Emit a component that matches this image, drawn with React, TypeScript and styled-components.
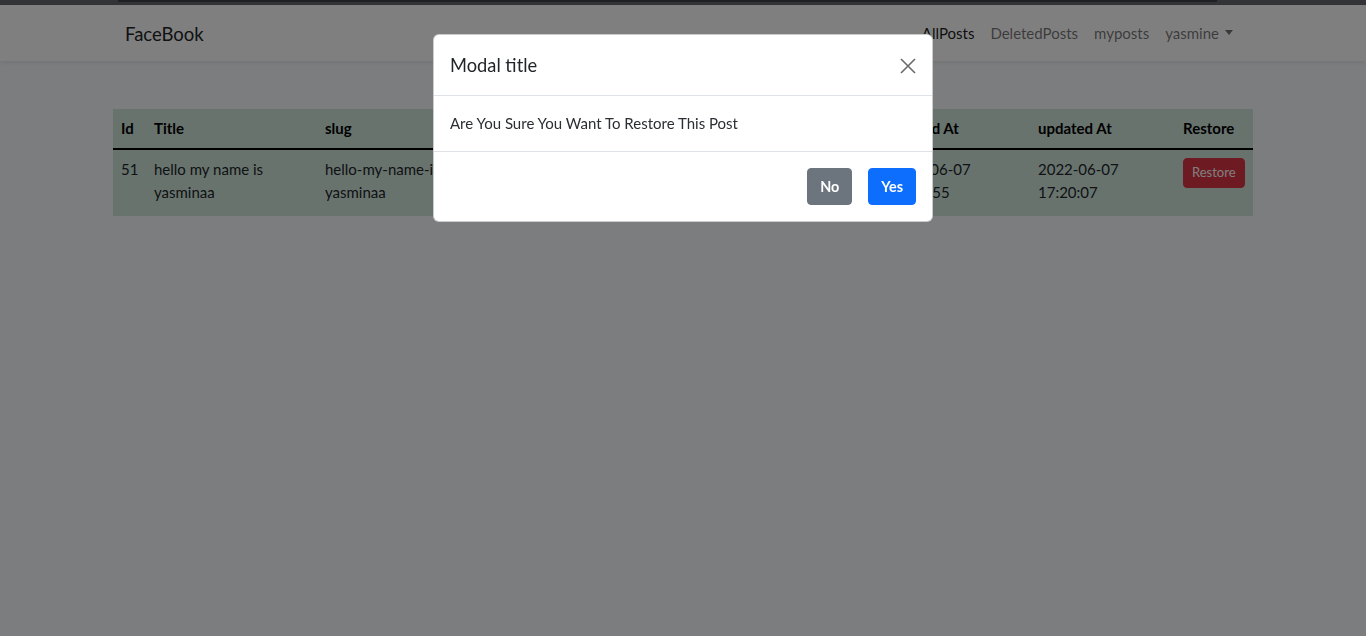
import React from "react";
import styled, { createGlobalStyle } from "styled-components";

const GlobalStyle = createGlobalStyle`
  html, body { margin: 0; padding: 0; }
  body {
    background: #f8fafc;
    font-family: "Lato", "Noto Sans", sans-serif;
    font-size: 15px;
    line-height: 23px;
    color: #212529;
  }
  * { box-sizing: border-box; }
`;

const TopStrip = styled.div`
  height: 5px;
  background: #666870;
  display: flex;
  padding-left: 118px;
  padding-right: 149px;
`;

const StripLine = styled.div`
  flex: 1;
  height: 2px;
  background: #3e4046;
`;

const Navbar = styled.nav`
  height: 56px;
  background: #ffffff;
  box-shadow: 0 2px 4px rgba(0, 0, 0, 0.075);
`;

const NavContainer = styled.div`
  max-width: 1140px;
  height: 100%;
  margin: 0 auto;
  padding: 0 12px;
  display: flex;
  align-items: center;
  justify-content: space-between;
`;

const Brand = styled.a`
  font-size: 18.5px;
  color: #212529;
  text-decoration: none;
  line-height: 28px;
  padding-top: 2px;
`;

const NavList = styled.div`
  display: flex;
  align-items: center;
`;

const NavLink = styled.a<{ $active?: boolean }>`
  padding: 8px 8px;
  color: ${(p) => (p.$active ? "rgba(0,0,0,0.9)" : "rgba(0,0,0,0.55)")};
  text-decoration: none;
  display: flex;
  align-items: center;
`;

const Caret = styled.span`
  display: inline-block;
  margin-left: 6px;
  border-top: 5px solid currentColor;
  border-left: 4.5px solid transparent;
  border-right: 4.5px solid transparent;
  transform: translateY(-1px);
`;

const Main = styled.main`
  max-width: 1140px;
  margin: 0 auto;
  padding-top: 48px;
`;

const Table = styled.table`
  width: 100%;
  border-collapse: collapse;
  table-layout: fixed;
  background: #d1e7dd;
  color: #000;
`;

const Th = styled.th`
  text-align: left;
  font-weight: 700;
  padding: 8px;
  border-bottom: 2px solid #000;
  vertical-align: bottom;
`;

const Td = styled.td`
  padding: 8px 8px 12px;
  vertical-align: top;
  color: #212529;
  height: 66px;
`;

const SmallDanger = styled.button`
  font-family: inherit;
  font-size: 13px;
  line-height: 1.5;
  padding: 4px 8px;
  border-radius: 4px;
  border: 1px solid #dc3545;
  background: #dc3545;
  color: #fff;
`;

const Backdrop = styled.div`
  position: fixed;
  inset: 0;
  background: rgba(0, 0, 0, 0.5);
  display: flex;
  justify-content: center;
  align-items: flex-start;
  padding-top: 34px;
`;

const Modal = styled.div`
  width: 500px;
  background: #fff;
  border: 1px solid rgba(0, 0, 0, 0.2);
  border-radius: 6px;
  display: flex;
  flex-direction: column;
`;

const ModalHeader = styled.div`
  display: flex;
  align-items: center;
  justify-content: space-between;
  padding: 17px 16px 16px;
  border-bottom: 1px solid #dee2e6;
`;

const ModalTitle = styled.h5`
  margin: 0;
  font-size: 18.3px;
  font-weight: 400;
  line-height: 27px;
  color: #212529;
`;

const CloseBtn = styled.button`
  width: 16px;
  height: 16px;
  padding: 0;
  border: 0;
  background: transparent;
  display: flex;
  align-items: center;
  justify-content: center;
`;

const ModalBody = styled.div`
  padding: 16px;
  color: #2b2f33;
`;

const ModalFooter = styled.div`
  display: flex;
  justify-content: flex-end;
  gap: 16px;
  padding: 16px;
  border-top: 1px solid #dee2e6;
`;

const Btn = styled.button<{ $variant: "secondary" | "primary" }>`
  font-family: inherit;
  font-size: 14.4px;
  font-weight: 700;
  line-height: 23px;
  padding: 6px 12px;
  border-radius: 4px;
  color: #fff;
  border: 1px solid ${(p) => (p.$variant === "primary" ? "#0d6efd" : "#6c757d")};
  background: ${(p) => (p.$variant === "primary" ? "#0d6efd" : "#6c757d")};
`;

export default function App() {
  return (
    <>
      <GlobalStyle />
      <TopStrip>
        <StripLine />
      </TopStrip>
      <Navbar>
        <NavContainer>
          <Brand href="#">FaceBook</Brand>
          <NavList>
            <NavLink $active href="#">AllPosts</NavLink>
            <NavLink href="#">DeletedPosts</NavLink>
            <NavLink href="#">myposts</NavLink>
            <NavLink href="#">
              yasmine
              <Caret />
            </NavLink>
          </NavList>
        </NavContainer>
      </Navbar>
      <Main>
        <Table>
          <colgroup>
            <col style={{ width: 33 }} />
            <col style={{ width: 171 }} />
            <col style={{ width: 160 }} />
            <col style={{ width: 250 }} />
            <col style={{ width: 155 }} />
            <col style={{ width: 148 }} />
            <col style={{ width: 145 }} />
            <col style={{ width: 78 }} />
          </colgroup>
          <thead>
            <tr>
              <Th>Id</Th>
              <Th>Title</Th>
              <Th>slug</Th>
              <Th>body</Th>
              <Th>user</Th>
              <Th>created At</Th>
              <Th>updated At</Th>
              <Th>Restore</Th>
            </tr>
          </thead>
          <tbody>
            <tr>
              <Td>51</Td>
              <Td>hello my name is yasminaa</Td>
              <Td>hello-my-name-is-yasminaa</Td>
              <Td>hello</Td>
              <Td>yasmine</Td>
              <Td>2022-06-07 17:20:55</Td>
              <Td>2022-06-07 17:20:07</Td>
              <Td>
                <SmallDanger>Restore</SmallDanger>
              </Td>
            </tr>
          </tbody>
        </Table>
      </Main>
      <Backdrop>
        <Modal>
          <ModalHeader>
            <ModalTitle>Modal title</ModalTitle>
            <CloseBtn aria-label="Close">
              <svg width="16" height="16" viewBox="0 0 16 16">
                <path d="M1 1L15 15M15 1L1 15" stroke="#6b6b6b" strokeWidth="1.6" />
              </svg>
            </CloseBtn>
          </ModalHeader>
          <ModalBody>Are You Sure You Want To Restore This Post</ModalBody>
          <ModalFooter>
            <Btn $variant="secondary">No</Btn>
            <Btn $variant="primary">Yes</Btn>
          </ModalFooter>
        </Modal>
      </Backdrop>
    </>
  );
}
